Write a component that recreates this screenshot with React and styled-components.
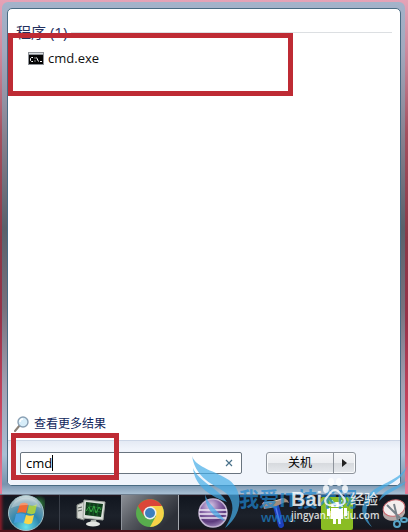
import { useState } from "react";
import styled, { createGlobalStyle } from "styled-components";

const GlobalStyle = createGlobalStyle`
  * {
    box-sizing: border-box;
  }

  body {
    margin: 0;
    font-family: "Open Sans", "Noto Sans CJK SC", sans-serif;
    font-size: 13px;
    color: #000;
  }

  button,
  input {
    font: inherit;
    color: inherit;
  }
`;

const Desktop = styled.div`
  position: relative;
  display: flex;
  flex-direction: column;
  min-height: 100vh;
  overflow: hidden;
  background: linear-gradient(
    #e5a3b7 0,
    #c98295 12%,
    #a3505f 25%,
    #8a3948 45%,
    #963249 60%,
    #c5445d 76%,
    #e87a96 92%
  );
`;

const Glass = styled.div`
  flex: 1;
  display: flex;
  margin: 2px 3px 0 2px;
  padding: 6px 4px 8px 5px;
  border-radius: 6px 6px 0 0;
  background: linear-gradient(
    #a3b3ca 0,
    #a2a9be 10%,
    #86808e 28%,
    #59616b 46%,
    #77717d 62%,
    #a1a0b2 78%,
    #a9bfd4 92%,
    #7893ad 98%,
    #a9c0d4 100%
  );
`;

const Panel = styled.main`
  flex: 1;
  display: flex;
  flex-direction: column;
  border: 1px solid #496b83;
  border-radius: 5px;
  background: #fff;
  overflow: hidden;
`;

const Results = styled.section`
  flex: 1;
  padding: 14px 8px 0;
`;

const Heading = styled.h1`
  display: flex;
  align-items: center;
  gap: 4px;
  margin: 0;
  font-size: 15px;
  line-height: 18px;
  font-weight: 400;
  color: #24305e;

  &::after {
    content: "";
    flex: 1;
    height: 1px;
    background: #dcdfe2;
  }
`;

const ResultLink = styled.a`
  display: flex;
  align-items: center;
  gap: 4px;
  padding: 8px 12px;
  line-height: 18px;
  color: #111;
  text-decoration: none;
`;

const MoreLink = styled.a`
  display: flex;
  align-items: center;
  gap: 5px;
  padding: 0 6px 7px;
  font-size: 12px;
  line-height: 18px;
  color: #10265c;
  text-decoration: none;
`;

const Footer = styled.footer`
  display: flex;
  align-items: center;
  gap: 24px;
  height: 45px;
  padding: 0 44px 0 12px;
  border-top: 1px solid #ccd6e6;
  background: linear-gradient(#e4eaf4 0, #f0f4fb 8px);
`;

const SearchBox = styled.label`
  flex: 1;
  display: flex;
  align-items: center;
  justify-content: space-between;
  height: 22px;
  min-width: 0;
  padding: 0 8px 0 5px;
  border: 1px solid #69747f;
  border-radius: 2px;
  background: #fff;
`;

const SearchInput = styled.input`
  field-sizing: content;
  height: 16px;
  padding: 0;
  border: 0;
  border-right: 1px solid #000;
  outline: 0;
  background: transparent;
  caret-color: transparent;
  line-height: 16px;
`;

const ClearButton = styled.button`
  display: flex;
  padding: 0;
  border: 0;
  background: none;
`;

const PowerGroup = styled.div`
  display: flex;
  height: 22px;
  border: 1px solid #8e949c;
  border-radius: 3px;
  background: linear-gradient(#f5f6f8 0, #eceef1 48%, #d7dade 52%, #e6e9ed 100%);
  box-shadow: inset 0 0 0 1px #fafbfc;
`;

const PowerButton = styled.button`
  display: flex;
  align-items: center;
  justify-content: center;
  width: ${props => (props.$arrow ? "22px" : "66px")};
  padding: 0;
  border: 0;
  border-left: ${props => (props.$arrow ? "1px solid #8e949c" : "0")};
  background: none;
  font-size: 12px;
  line-height: 18px;
`;

const Taskbar = styled.nav`
  display: flex;
  align-items: stretch;
  height: 38px;
  border-top: 1px solid #6f7f90;
  border-bottom: 2px solid #50101c;
  background: linear-gradient(#11161f, #1c212a 60%, #15161d);
  box-shadow: inset 3px 0 3px -1px #8b1d2a;
`;

const TaskButton = styled.button`
  flex: none;
  display: flex;
  align-items: center;
  justify-content: center;
  width: ${props => props.$width};
  padding: 0;
  border: 0;
  border-right: 1px solid ${props => (props.$active ? "#a6a9af" : props.$line ? "#3a3f49" : "transparent")};
  border-left: 1px solid ${props => (props.$active ? "#8f949c" : "transparent")};
  background: ${props =>
    props.$active ? "linear-gradient(135deg, #8b8f96, #55585f 40%, #2d3038 80%)" : "none"};

  svg {
    flex: none;
  }
`;

const StartButton = styled(TaskButton)`
  justify-content: flex-start;
  padding-left: 6px;
`;

const Mark = styled.div`
  position: absolute;
  top: ${props => props.$top};
  left: ${props => props.$left};
  width: ${props => props.$width};
  height: ${props => props.$height};
  border: 5px solid #be2b34;
  pointer-events: none;
`;

const BlueStamp = styled.div`
  position: absolute;
  right: 0;
  bottom: 0;
  width: 224px;
  height: 80px;
  color: #1f86cf;
  opacity: 0.7;
  pointer-events: none;

  svg {
    position: absolute;
    inset: 0;
  }
`;

const BlueName = styled.div`
  position: absolute;
  top: 36px;
  left: 55px;
  font-size: 20px;
  line-height: 24px;
  font-weight: 700;
  white-space: nowrap;
`;

const BlueSite = styled.div`
  position: absolute;
  top: 56px;
  left: 77px;
  font-size: 13px;
  line-height: 18px;
  font-weight: 600;
`;

const WhiteStamp = styled.div`
  position: absolute;
  right: 24px;
  bottom: 11px;
  width: 93px;
  color: #fff;
  opacity: 0.82;
  font-family: "Open Sans", "Noto Sans CJK SC", sans-serif;
  pointer-events: none;
`;

const WhiteName = styled.div`
  display: flex;
  align-items: center;
  font-family: "Liberation Sans", "Noto Sans CJK SC", sans-serif;
  font-size: 20px;
  line-height: 20px;
  font-weight: 700;

  svg {
    flex: none;
    margin: -14px 2px 0 0;
  }

  small {
    font-size: 14px;
    font-weight: 500;
    white-space: nowrap;
  }
`;

const WhiteSite = styled.div`
  font-size: 10px;
  line-height: 12px;
  font-weight: 600;
`;

const ConsoleIcon = () => (
  <svg width="16" height="13" viewBox="0 0 16 13">
    <rect width="16" height="13" fill="#8d9197" />
    <path d="M1 1h14v1H1z" fill="#d9dcdf" />
    <path d="M1 3h14v9H1z" fill="#050505" />
    <path
      d="M5 5.5H3.5L2.5 6.5v2l1 1H5M6.5 6h1M6.5 9h1M8.5 5.5l2 4M12 9.5h2"
      fill="none"
      stroke="#fff"
    />
  </svg>
);

const MagnifierIcon = () => (
  <svg width="15" height="16" viewBox="0 0 15 16">
    <path d="M1 15l5-6" stroke="#8b8278" strokeWidth="2" strokeLinecap="round" />
    <circle cx="9" cy="6" r="5" fill="#d7edf9" stroke="#8aa0b4" strokeWidth="1.4" />
    <path d="M6 6a3 3 0 013-3" fill="none" stroke="#fff" strokeWidth="1.5" />
  </svg>
);

const StartIcon = () => (
  <svg width="38" height="36" viewBox="0 0 38 36">
    <defs>
      <radialGradient id="orb" cx="50%" cy="90%" r="90%">
        <stop offset="0" stopColor="#67e2ec" />
        <stop offset="0.45" stopColor="#2d86ae" />
        <stop offset="0.8" stopColor="#779faf" />
        <stop offset="1" stopColor="#d9e4e4" />
      </radialGradient>
      <radialGradient id="glow">
        <stop offset="0" stopColor="#2f8a3c" />
        <stop offset="1" stopColor="#2f8a3c" stopOpacity="0" />
      </radialGradient>
    </defs>
    <circle cx="32" cy="9" r="9" fill="url(#glow)" />
    <circle cx="19" cy="18" r="17.5" fill="url(#orb)" stroke="#a4c3c9" />
    <path d="M13 9c3-2 6-1 8 0l-2 9c-3-1-6-1-9 0z" fill="#ee6a36" />
    <path d="M22 10c3 1 5 1 8-1l-2 9c-3 2-5 1-8 0z" fill="#a6cc48" />
    <path d="M9 19c3-1 6-1 9 0l-2 9c-3-1-6-1-9 0z" fill="#469fdf" />
    <path d="M19 20c3 1 5 1 8 0l-2 8c-3 2-5 1-8 0z" fill="#fbd547" />
    <path d="M4 13c5-14 25-14 30 0-9-4-21-4-30 0z" fill="#fff" opacity="0.3" />
  </svg>
);

const MonitorIcon = () => (
  <svg width="30" height="30" viewBox="0 0 30 30">
    <path d="M1 7l7-3v18l-7-2z" fill="#d5d8d3" stroke="#888e88" />
    <path d="M2 10l4-1M2 13l4-1" stroke="#59635b" />
    <path d="M8 2l21 2-2 18-20-2z" fill="#dce0db" stroke="#a4aaa3" />
    <path d="M10 4l17 2-2 13-16-2z" fill="#103b1b" />
    <path d="M11 8l15 2M11 12l14 2M14 5l-1 12M18 6l-1 12M22 6l-1 12" stroke="#247b34" strokeWidth="0.7" />
    <path d="M10 13l3-4 2 5 3-6 2 7 3-6 2 3" fill="none" stroke="#38a943" />
    <path d="M15 22h5l1 3h-7z" fill="#aeb4ad" />
    <ellipse cx="17" cy="26" rx="7" ry="2.5" fill="#e4e6e2" />
  </svg>
);

const ChromeIcon = () => (
  <svg width="30" height="30" viewBox="0 0 30 30">
    <circle cx="15" cy="15" r="14" fill="#58ad4d" />
    <path d="M15 8h12a14 14 0 01-12 21l6-11z" fill="#f7d348" />
    <path d="M3 8l6 10 6-10h12C22-1 8-1 3 8z" fill="#db4638" />
    <circle cx="15" cy="15" r="6.5" fill="#eef1f3" />
    <circle cx="15" cy="15" r="5" fill="#3e7fbe" />
  </svg>
);

const EclipseIcon = () => (
  <svg width="32" height="32" viewBox="0 0 32 32">
    <defs>
      <radialGradient id="moon" cx="40%" cy="25%" r="80%">
        <stop offset="0" stopColor="#ddd0ea" />
        <stop offset="0.4" stopColor="#8c6bab" />
        <stop offset="0.7" stopColor="#5b3a7c" />
        <stop offset="1" stopColor="#a78fc0" />
      </radialGradient>
    </defs>
    <circle cx="16" cy="16" r="14" fill="url(#moon)" stroke="#c2b2d1" strokeWidth="1.5" />
    <path d="M2 13h28M2 17h28M3 21h26" stroke="#eee7f5" strokeWidth="1.7" />
  </svg>
);

const HammerIcon = () => (
  <svg width="30" height="32" viewBox="0 0 30 32">
    <path d="M15 9l5 19" stroke="#1c40bd" strokeWidth="6" strokeLinecap="round" />
    <path d="M15 11l4 16" stroke="#5478e8" strokeWidth="1.5" />
    <path d="M1 6l8-2 3 1 9-4c4 0 6 2 7 5-4-2-7 1-10 2l-8 3-7 1z" fill="#a38b7e" />
    <path d="M2 6l8-1 11-3" stroke="#d4c4b5" fill="none" />
  </svg>
);

const AndroidIcon = () => (
  <svg width="32" height="34" viewBox="0 0 32 34">
    <rect y="1" width="32" height="33" rx="2" fill="#8abd24" />
    <path
      d="M10 11a6 5 0 0112 0zM10 12h12v11H10zM6 12h3v8H6zM23 12h3v8h-3zM12 23h3v5h-3zM17 23h3v5h-3z"
      fill="#fff"
    />
    <path d="M11 4l2 3M21 4l-2 3" stroke="#fff" />
  </svg>
);

const SnipIcon = () => (
  <svg width="26" height="32" viewBox="0 0 26 32">
    <path d="M1 12v6c2 8 18 8 22-2v-7z" fill="#b5a9a8" />
    <ellipse cx="12" cy="11" rx="11" ry="8" fill="#f4eeee" stroke="#ca6970" transform="rotate(-15 12 11)" />
    <path d="M5 8l15 15M12 7l4 17" stroke="#778189" strokeWidth="2" />
    <circle cx="15" cy="27" r="3" fill="none" stroke="#57a4c6" strokeWidth="2" />
    <ellipse cx="22" cy="23" rx="3" ry="2" fill="none" stroke="#57a4c6" strokeWidth="2" />
  </svg>
);

const PawIcon = () => (
  <svg width="26" height="30" viewBox="0 0 26 30" fill="#fff">
    <ellipse cx="4" cy="12" rx="3" ry="4" />
    <ellipse cx="9" cy="5" rx="3" ry="4" />
    <ellipse cx="17" cy="5" rx="3" ry="4" />
    <ellipse cx="23" cy="12" rx="3" ry="4" />
    <path
      d="M13 13c4 0 5 4 8 7 4 4 1 9-4 8-3-1-5-1-8 0-5 1-8-4-4-8 3-3 4-7 8-7z"
      fill="none"
      stroke="#fff"
      strokeWidth="2"
    />
  </svg>
);

const Wings = () => (
  <svg width="224" height="80" viewBox="0 0 224 80" fill="#45ade8">
    <path d="M8 4C12 16 32 19 45 28c16 12 13 35-4 48 7-11 11-22 3-33C36 34 12 30 8 4z" />
    <path d="M9 16c5 13 25 20 34 34C29 45 11 36 9 16z" />
    <path d="M21 42c3 11 13 16 20 27-12-4-20-13-20-27z" />
    <path d="M223 14c-4 15-19 17-31 28-12 11-12 22-4 33-11-9-14-21-2-34 11-10 30-13 37-27z" />
    <path d="M223 29c-8 9-19 10-28 20 4-13 17-13 28-20z" />
  </svg>
);

const tasks = [
  { name: "监视器", icon: <MonitorIcon />, width: "61px" },
  { name: "Chrome", icon: <ChromeIcon />, width: "58px", active: true },
  { name: "Eclipse", icon: <EclipseIcon />, width: "68px" },
  { name: "工具", icon: <HammerIcon />, width: "58px" },
  { name: "Android", icon: <AndroidIcon />, width: "64px" },
  { name: "截图", icon: <SnipIcon />, width: "52px" },
];

const App = () => {
  const [query, setQuery] = useState("cmd");

  return (
    <Desktop>
      <GlobalStyle />
      <Glass>
        <Panel>
          <Results>
            <Heading>程序 (1)</Heading>
            <ResultLink href="#cmd">
              <ConsoleIcon />
              cmd.exe
            </ResultLink>
          </Results>
          <MoreLink href="#more">
            <MagnifierIcon />
            查看更多结果
          </MoreLink>
          <Footer>
            <SearchBox>
              <SearchInput
                aria-label="搜索"
                value={query}
                onChange={e => setQuery(e.target.value)}
              />
              <ClearButton aria-label="清除" onClick={() => setQuery("")}>
                <svg width="8" height="8" viewBox="0 0 8 8">
                  <path d="M1 1l6 6M7 1L1 7" stroke="#49718a" strokeWidth="1.2" />
                </svg>
              </ClearButton>
            </SearchBox>
            <PowerGroup>
              <PowerButton>关机</PowerButton>
              <PowerButton $arrow aria-label="更多选项">
                <svg width="5" height="8" viewBox="0 0 5 8">
                  <path d="M0 0l5 4-5 4z" fill="#222" />
                </svg>
              </PowerButton>
            </PowerGroup>
          </Footer>
        </Panel>
      </Glass>
      <Taskbar>
        <StartButton aria-label="开始" $width="60px" $line>
          <StartIcon />
        </StartButton>
        {tasks.map(task => (
          <TaskButton
            key={task.name}
            aria-label={task.name}
            $width={task.width}
            $active={task.active}
          >
            {task.icon}
          </TaskButton>
        ))}
      </Taskbar>
      <Mark $top="33px" $left="8px" $width="285px" $height="63px" />
      <Mark $top="433px" $left="11px" $width="108px" $height="47px" />
      <BlueStamp>
        <Wings />
        <BlueName>我爱IT技术网</BlueName>
        <BlueSite>www.</BlueSite>
      </BlueStamp>
      <WhiteStamp>
        <WhiteName>
          Bai
          <PawIcon />
          <small>经验</small>
        </WhiteName>
        <WhiteSite>jingyan.baidu.com</WhiteSite>
      </WhiteStamp>
    </Desktop>
  );
};

export default App;
